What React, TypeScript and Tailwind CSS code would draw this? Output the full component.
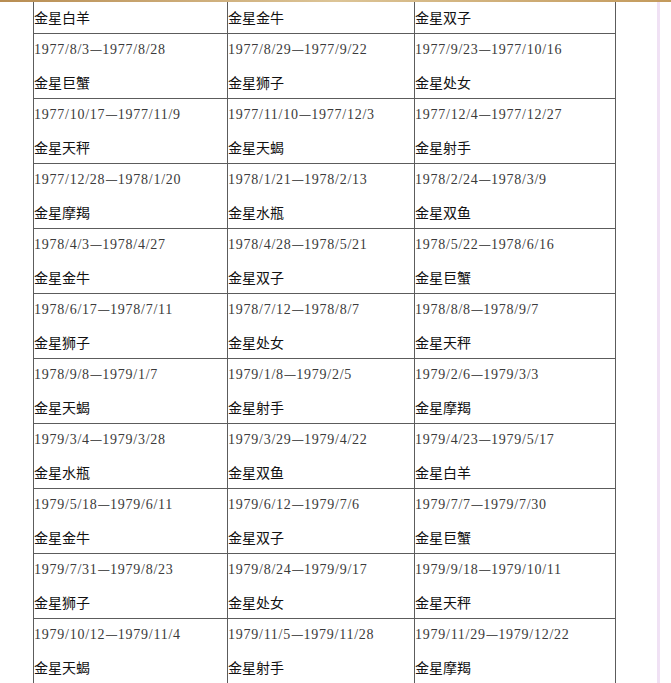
import React from "react";

type Cell = { date?: string; sign: string };

const rows: Cell[][] = [
  [{ sign: "金星白羊" }, { sign: "金星金牛" }, { sign: "金星双子" }],
  [
    { date: "1977/8/3—1977/8/28", sign: "金星巨蟹" },
    { date: "1977/8/29—1977/9/22", sign: "金星狮子" },
    { date: "1977/9/23—1977/10/16", sign: "金星处女" },
  ],
  [
    { date: "1977/10/17—1977/11/9", sign: "金星天秤" },
    { date: "1977/11/10—1977/12/3", sign: "金星天蝎" },
    { date: "1977/12/4—1977/12/27", sign: "金星射手" },
  ],
  [
    { date: "1977/12/28—1978/1/20", sign: "金星摩羯" },
    { date: "1978/1/21—1978/2/13", sign: "金星水瓶" },
    { date: "1978/2/24—1978/3/9", sign: "金星双鱼" },
  ],
  [
    { date: "1978/4/3—1978/4/27", sign: "金星金牛" },
    { date: "1978/4/28—1978/5/21", sign: "金星双子" },
    { date: "1978/5/22—1978/6/16", sign: "金星巨蟹" },
  ],
  [
    { date: "1978/6/17—1978/7/11", sign: "金星狮子" },
    { date: "1978/7/12—1978/8/7", sign: "金星处女" },
    { date: "1978/8/8—1978/9/7", sign: "金星天秤" },
  ],
  [
    { date: "1978/9/8—1979/1/7", sign: "金星天蝎" },
    { date: "1979/1/8—1979/2/5", sign: "金星射手" },
    { date: "1979/2/6—1979/3/3", sign: "金星摩羯" },
  ],
  [
    { date: "1979/3/4—1979/3/28", sign: "金星水瓶" },
    { date: "1979/3/29—1979/4/22", sign: "金星双鱼" },
    { date: "1979/4/23—1979/5/17", sign: "金星白羊" },
  ],
  [
    { date: "1979/5/18—1979/6/11", sign: "金星金牛" },
    { date: "1979/6/12—1979/7/6", sign: "金星双子" },
    { date: "1979/7/7—1979/7/30", sign: "金星巨蟹" },
  ],
  [
    { date: "1979/7/31—1979/8/23", sign: "金星狮子" },
    { date: "1979/8/24—1979/9/17", sign: "金星处女" },
    { date: "1979/9/18—1979/10/11", sign: "金星天秤" },
  ],
  [
    { date: "1979/10/12—1979/11/4", sign: "金星天蝎" },
    { date: "1979/11/5—1979/11/28", sign: "金星射手" },
    { date: "1979/11/29—1979/12/22", sign: "金星摩羯" },
  ],
];

function DateText({ text }: { text: string }) {
  const [a, b] = text.split("—");
  return (
    <div className="block h-[32px] min-h-[32px] max-h-[32px] overflow-hidden shrink-0 text-[14px] leading-[32px] text-[#3a3a3a] whitespace-nowrap font-['Liberation_Serif',serif] tracking-[0.75px]">
      {a}
      <span className="font-['Noto_Sans_CJK_SC',sans-serif] tracking-normal text-[#555] leading-none">—</span>
      {b}
    </div>
  );
}

export default function App() {
  return (
    <div className="relative w-[671px] h-[683px] overflow-hidden bg-white">
      <div className="absolute left-0 top-0 w-full h-[2px] bg-gradient-to-r from-[#b88d52] via-[#dcc496] to-[#c39a5c] z-10" />
      <div className="flex items-start pt-[1px]">
        <div className="w-[33px] shrink-0" />
        <div className="flex flex-col border-r border-[#5c5c5c] shrink-0">
          {rows.map((row, ri) => (
            <div
              key={ri}
              className={
                ri === 0
                  ? "flex h-[33px] min-h-[33px] max-h-[33px] shrink-0"
                  : "flex h-[65px] min-h-[65px] max-h-[65px] shrink-0"
              }
            >
              {row.map((c, ci) => (
                <div
                  key={ci}
                  className={
                    ci === 0
                      ? "w-[194px] shrink-0 border-l border-b border-[#5c5c5c] flex flex-col overflow-hidden"
                      : ci === 1
                      ? "w-[187px] shrink-0 border-l border-b border-[#5c5c5c] flex flex-col overflow-hidden"
                      : "w-[201px] shrink-0 border-l border-b border-[#5c5c5c] flex flex-col overflow-hidden"
                  }
                >
                  {c.date && <DateText text={c.date} />}
                  <div className="flex items-center h-[32px] min-h-[32px] max-h-[32px] shrink-0 overflow-hidden text-[14px] leading-none text-[#111] whitespace-nowrap font-['Noto_Sans_CJK_SC',sans-serif]">
                    {c.sign}
                  </div>
                </div>
              ))}
            </div>
          ))}
        </div>
        <div className="w-[41px] shrink-0" />
        <div className="w-[3px] h-[700px] bg-[#f0e1f4] shrink-0" />
      </div>
    </div>
  );
}
